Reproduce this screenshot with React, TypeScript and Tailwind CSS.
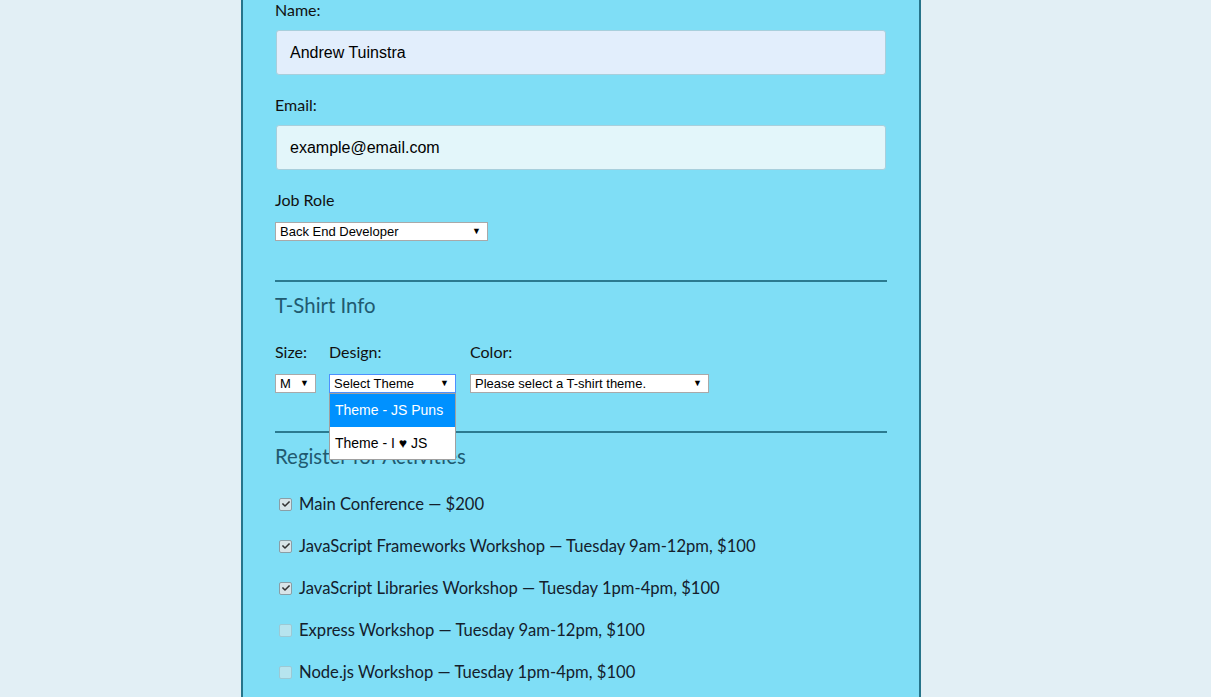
import { FaCheck } from "react-icons/fa";

const activities = [
  { label: "Main Conference — $200", checked: true },
  { label: "JavaScript Frameworks Workshop — Tuesday 9am-12pm, $100", checked: true },
  { label: "JavaScript Libraries Workshop — Tuesday 1pm-4pm, $100", checked: true },
  { label: "Express Workshop — Tuesday 9am-12pm, $100", checked: false },
  { label: "Node.js Workshop — Tuesday 1pm-4pm, $100", checked: false },
];

const FakeSelect = ({
  value,
  width,
  focused,
}: {
  value: string;
  width: string;
  focused?: boolean;
}) => (
  <div
    className={`${width} h-[19px] bg-white flex items-center justify-between pl-[4px] pr-[6px] text-[13px] text-black font-['Liberation_Sans',Arial,sans-serif] ${
      focused ? "border border-[#4d90fe]" : "border border-[#a9a9a9]"
    }`}
  >
    <span className="leading-none">{value}</span>
    <span className="text-[9px] leading-none">▼</span>
  </div>
);

const App = () => {
  return (
    <div className="min-h-[697px] bg-[#e2eff5] overflow-hidden font-['Lato',sans-serif]">
      <div className="ml-[241px] w-[680px] min-h-[697px] bg-[#7fdef6] border-x-2 border-[#26748a] px-[32px]">
        {/* Basic info */}
        <label className="block h-[20px] leading-[20px] text-[16px] text-[#111]">Name:</label>
        <div className="mt-[10px] ml-[1px] w-[610px] h-[45px] rounded-[3px] border border-[#a8cfdc] bg-[#e2eefc] flex items-center pl-[13px] text-[16px] text-black font-['Liberation_Sans',Arial,sans-serif]">
          Andrew Tuinstra
        </div>

        <label className="block mt-[20px] h-[20px] leading-[20px] text-[16px] text-[#111]">Email:</label>
        <div className="mt-[10px] ml-[1px] w-[610px] h-[45px] rounded-[3px] border border-[#a8cfdc] bg-[#e3f6fa] flex items-center pl-[13px] text-[16px] text-black font-['Liberation_Sans',Arial,sans-serif]">
          example@email.com
        </div>

        <label className="block mt-[20px] h-[20px] leading-[20px] text-[16px] text-[#111]">Job Role</label>
        <div className="mt-[12px]">
          <FakeSelect value="Back End Developer" width="w-[213px]" />
        </div>

        {/* T-Shirt */}
        <hr className="mt-[39px] border-0 h-[2px] bg-[#2b7a90]" />
        <h2 className="mt-[9px] h-[28px] leading-[28px] text-[20.4px] text-[#215a70]">T-Shirt Info</h2>

        <div className="mt-[23px] flex gap-[13px]">
          <div>
            <div className="h-[20px] leading-[20px] text-[16px] text-[#111]">Size:</div>
            <div className="mt-[12px]">
              <FakeSelect value="M" width="w-[41px]" />
            </div>
          </div>
          <div className="relative">
            <div className="h-[20px] leading-[20px] text-[16px] text-[#111]">Design:</div>
            <div className="mt-[12px]">
              <FakeSelect value="Select Theme" width="w-[127px]" focused />
            </div>
            {/* open dropdown */}
            <div className="absolute left-0 top-[51px] z-10 w-[127px] bg-white border border-[#a0a0a0] text-[14px] font-['Liberation_Sans',Arial,sans-serif]">
              <div className="h-[33px] flex items-center pl-[5px] bg-[#0091ff] text-white">Theme - JS Puns</div>
              <div className="h-[32px] flex items-center pl-[5px] text-black">Theme - I ♥ JS</div>
            </div>
          </div>
          <div className="ml-[1px]">
            <div className="h-[20px] leading-[20px] text-[16px] text-[#111]">Color:</div>
            <div className="mt-[12px]">
              <FakeSelect value="Please select a T-shirt theme." width="w-[239px]" />
            </div>
          </div>
        </div>

        {/* Activities */}
        <hr className="mt-[38px] border-0 h-[2px] bg-[#2b7a90]" />
        <h2 className="mt-[9px] h-[28px] leading-[28px] text-[20.4px] text-[#215a70]">Register for Activities</h2>

        <div className="mt-[24px] flex flex-col gap-[22px]">
          {activities.map((a) => (
            <label key={a.label} className="flex items-center h-[20px] text-[16.6px] text-[#14202c]">
              <span
                className={`ml-[4px] mr-[7px] w-[13px] h-[13px] rounded-[2px] border flex items-center justify-center ${
                  a.checked ? "bg-[#d8e4e8] border-[#8a9ea6]" : "bg-[#b7e4ee] border-[#9cc9d4]"
                }`}
              >
                {a.checked && <FaCheck className="text-[8px] text-[#333]" />}
              </span>
              {a.label}
            </label>
          ))}
        </div>
      </div>
    </div>
  );
};

export default App;
